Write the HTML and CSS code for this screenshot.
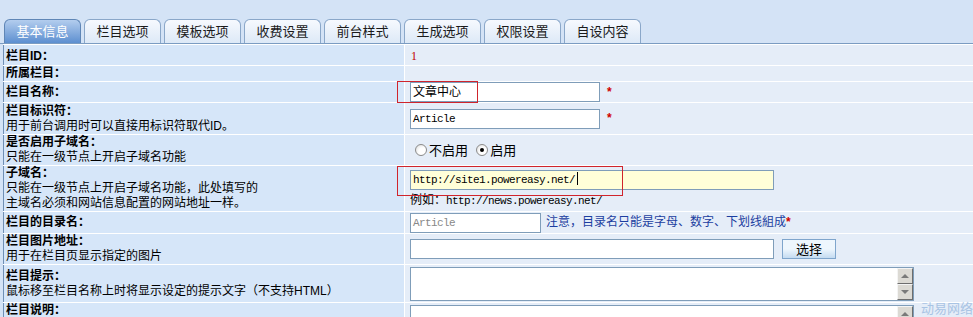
FILE: index.html
```html
<!DOCTYPE html>
<html lang="zh-CN">
<head>
    <meta charset="UTF-8">
    <title>栏目设置</title>
    <link rel="stylesheet" href="styles.css">
</head>
<body>
    <!-- 选项卡 -->
    <div class="tabs">
        <div class="tab active">基本信息</div>
        <div class="tab">栏目选项</div>
        <div class="tab">模板选项</div>
        <div class="tab">收费设置</div>
        <div class="tab">前台样式</div>
        <div class="tab">生成选项</div>
        <div class="tab">权限设置</div>
        <div class="tab">自设内容</div>
    </div>

    <table class="form">
        <tr class="r1">
            <td class="lbl"><b>栏目ID：</b></td>
            <td class="val"><span class="num">1</span></td>
        </tr>
        <tr class="r2">
            <td class="lbl"><b>所属栏目：</b></td>
            <td class="val"></td>
        </tr>
        <tr class="r3">
            <td class="lbl"><b>栏目名称：</b></td>
            <td class="val">
                <span class="mark mark-name"></span>
                <div class="field w190">文章中心</div><span class="star">*</span>
            </td>
        </tr>
        <tr class="r4">
            <td class="lbl"><b>栏目标识符：</b><br>用于前台调用时可以直接用标识符取代ID。</td>
            <td class="val"><div class="field w190 mono">Article</div><span class="star">*</span></td>
        </tr>
        <tr class="r5">
            <td class="lbl"><b>是否启用子域名：</b><br>只能在一级节点上开启子域名功能</td>
            <td class="val">
                <span class="radio"></span><span class="opt">不启用</span>
                <span class="radio on"></span><span class="opt">启用</span>
            </td>
        </tr>
        <tr class="r6">
            <td class="lbl"><b>子域名：</b><br>只能在一级节点上开启子域名功能，此处填写的<br>主域名必须和网站信息配置的网站地址一样。</td>
            <td class="val">
                <span class="mark mark-domain"></span>
                <div class="field w364 mono yellow">http://site1.powereasy.net/<span class="caret"></span></div>
                <div class="hint">例如：<span class="mono">http://news.powereasy.net/</span></div>
            </td>
        </tr>
        <tr class="r7">
            <td class="lbl"><b>栏目的目录名：</b></td>
            <td class="val">
                <div class="field w131 mono grey">Article</div><span class="note">注意，目录名只能是字母、数字、下划线組成<span class="star">*</span></span>
            </td>
        </tr>
        <tr class="r8">
            <td class="lbl"><b>栏目图片地址：</b><br>用于在栏目页显示指定的图片</td>
            <td class="val"><div class="field w364"></div><span class="btn">选择</span></td>
        </tr>
        <tr class="r9">
            <td class="lbl"><b>栏目提示：</b><br>鼠标移至栏目名称上时将显示设定的提示文字（不支持HTML）</td>
            <td class="val"><div class="area"><div class="scroll"><span class="sb up"></span><span class="sb down"></span></div></div></td>
        </tr>
        <tr class="r10">
            <td class="lbl"><b>栏目说明：</b></td>
            <td class="val"><div class="area"><div class="scroll"><span class="sb up"></span><span class="sb down"></span></div></div></td>
        </tr>
    </table>

    <div class="brand">动易网络</div>
</body>
</html>
```

FILE: styles.css
```css
body {
    margin: 0;
    padding: 0;
    background-color: #d4e3f6;
    font-family: "Liberation Sans", "Noto Sans CJK SC", sans-serif;
    font-size: 12px;
    color: #000;
    overflow: hidden;
}

/* 选项卡 */
.tabs {
    display: flex;
    gap: 3px;
    padding: 19px 0 0 4px;
    height: 24px;
    border-bottom: 1px solid #7b9cc2;
}
.tab {
    width: 75px;
    height: 23px;
    line-height: 23px;
    text-align: center;
    border: 1px solid #8aa7c9;
    border-bottom: none;
    border-radius: 6px 6px 0 0;
    background: linear-gradient(#f6f9fe, #dde9f7);
    color: #1a1a1a;
    font-size: 13px;
}
.tab.active {
    background: linear-gradient(#b3cdee, #5d8fd0);
    border-color: #5f86b6;
    color: #fff;
}

/* 表单 */
.form {
    width: 970px;
    margin-left: 3px;
    border-collapse: collapse;
    border-left: 1px solid #6f8fb5;
    border-top: 1px solid #fff;
}
.form td {
    padding: 0;
    border-bottom: 1px solid #fff;
    vertical-align: middle;
    line-height: 15px;
}
.form td.lbl {
    width: 398px;
    padding-left: 2px;
    background-color: #d6e6f9;
    border-right: 1px solid #fff;
}
.form td.val {
    position: relative;
    padding-left: 5px;
    background-color: #e5edf8;
}
.r1 td { height: 18px; padding-top: 2px; }
.r2 td { height: 15px; }
.r3 td { height: 20px; }
.r4 td { height: 31px; }
.r5 td { height: 30px; }
.r6 td { height: 43px; }
.r7 td { height: 21px; }
.r8 td { height: 28px; }
.r9 td { height: 37px; }
.r10 td { height: 30px; vertical-align: top; }

.num {
    color: #c00000;
    font-family: "Liberation Serif", serif;
    padding-left: 1px;
}

.field {
    display: inline-block;
    vertical-align: middle;
    line-height: 18px;
    border: 1px solid #7f9db9;
    background: #fff;
    padding-left: 2px;
    box-sizing: border-box;
    height: 20px;
    white-space: nowrap;
}
.w190 { width: 190px; }
.w364 { width: 364px; }
.w131 { width: 131px; }
.mono {
    font-family: "Liberation Mono", monospace;
    font-size: 11px;
    letter-spacing: -0.6px;
}
.field.yellow { background: #ffffd8; }
.field.grey { color: #888; }
.caret {
    display: inline-block;
    width: 1px;
    height: 13px;
    background: #000;
    vertical-align: -2px;
    margin-left: 2px;
}

.star {
    color: #d00000;
    font-weight: bold;
    margin-left: 7px;
    vertical-align: middle;
}
.note .star { margin-left: 0; }
.note {
    color: #1c3ea0;
    margin-left: 5px;
    vertical-align: middle;
}
.hint {
    margin-top: 3px;
    height: 14px;
}
.hint .mono { color: #000; }

.radio {
    display: inline-block;
    width: 12px;
    height: 12px;
    border: 1px solid #8a8a8a;
    border-radius: 50%;
    background: radial-gradient(circle at 65% 65%, #fff 40%, #d8d8d8);
    vertical-align: middle;
    margin-left: 5px;
    position: relative;
    box-sizing: border-box;
}
.radio.on::after {
    content: "";
    position: absolute;
    left: 3px;
    top: 3px;
    width: 4px;
    height: 4px;
    border-radius: 50%;
    background: #000;
}
.opt {
    vertical-align: middle;
    margin-left: 2px;
    font-size: 13px;
}

.btn {
    display: inline-block;
    vertical-align: middle;
    margin-left: 8px;
    width: 54px;
    height: 20px;
    line-height: 19px;
    text-align: center;
    box-sizing: border-box;
    border: 1px solid #7fa5cc;
    background: linear-gradient(#eef6fd 50%, #c4dbf1);
    font-size: 13px;
}

.area {
    position: relative;
    width: 504px;
    height: 34px;
    box-sizing: border-box;
    border: 1px solid #7f9db9;
    background: #fff;
}
.r10 .area { margin-top: 2px; }
.scroll {
    position: absolute;
    right: 0;
    top: 0;
    width: 16px;
    height: 32px;
    background: #ece9e3;
}
.sb {
    display: block;
    position: relative;
    height: 16px;
    box-sizing: border-box;
    border: 1px solid;
    border-color: #f4f4f4 #6e6e6e #6e6e6e #f4f4f4;
    background: #dcdad4;
}
.sb::after {
    content: "";
    position: absolute;
    left: 3px;
    border-left: 4px solid transparent;
    border-right: 4px solid transparent;
}
.sb.up::after {
    top: 5px;
    border-bottom: 4px solid #7a7a7a;
}
.sb.down::after {
    top: 5px;
    border-top: 4px solid #7a7a7a;
}

/* 红框标记 */
.mark {
    position: absolute;
    border: 1px solid #d0242c;
    pointer-events: none;
}
.mark-name {
    left: -8px;
    top: -1px;
    width: 79px;
    height: 20px;
}
.mark-domain {
    left: -8px;
    top: 0;
    width: 224px;
    height: 28px;
}

.brand {
    position: absolute;
    left: 921px;
    top: 302px;
    line-height: 14px;
    color: #a9c4e4;
    font-size: 13px;
}
```
